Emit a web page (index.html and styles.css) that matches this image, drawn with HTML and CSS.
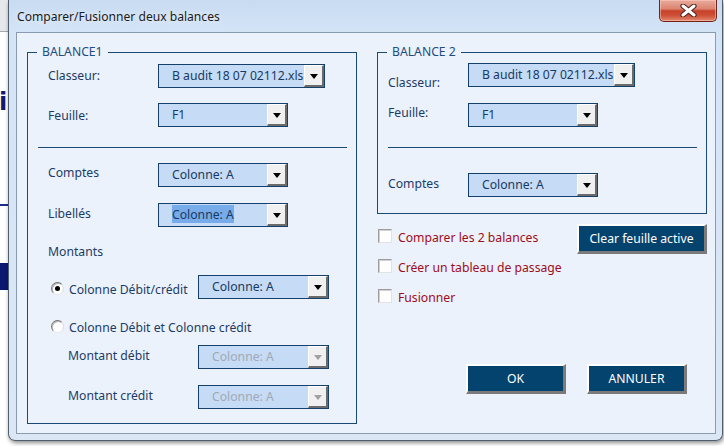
FILE: index.html
```html
<!DOCTYPE html>
<html lang="fr">
<head>
<meta charset="utf-8">
<title>Comparer/Fusionner deux balances</title>
<link rel="stylesheet" href="styles.css">
</head>
<body>
<div class="desk">
  <div class="backdrop">
    <div class="bd-top"></div>
    <div class="bd-line"></div>
    <div class="bd-glyph">i</div>
    <div class="bd-rule"></div>
    <div class="bd-block"></div>
  </div>
  <div class="window">
    <div class="titlebar">
      <span class="title">Comparer/Fusionner deux balances</span>
      <div class="close">
        <svg width="17" height="13" viewBox="0 0 17 13">
          <path d="M3 2 L14 11 M14 2 L3 11" stroke="#4a2620" stroke-width="5.2" stroke-linecap="round" fill="none"/>
          <path d="M3 2 L14 11 M14 2 L3 11" stroke="#ffffff" stroke-width="3" stroke-linecap="round" fill="none"/>
        </svg>
      </div>
    </div>
    <div class="client">
      <fieldset class="group g1">
        <legend>BALANCE1</legend>
        <div class="row r-classeur1">
          <span class="lab lab1 pt2">Classeur:</span>
          <div class="combo w167"><span class="val">B audit 18 07 02112.xls</span><span class="arrow"></span></div>
        </div>
        <div class="row r-feuille1">
          <span class="lab lab1 pt4">Feuille:</span>
          <div class="combo w130"><span class="val">F1</span><span class="arrow"></span></div>
        </div>
        <div class="sep"></div>
        <div class="row r-comptes1">
          <span class="lab lab1">Comptes</span>
          <div class="combo w130"><span class="val">Colonne: A</span><span class="arrow"></span></div>
        </div>
        <div class="row r-libelles">
          <span class="lab lab1 pt1">Libellés</span>
          <div class="combo w130"><span class="val"><span class="sel">Colonne: A</span></span><span class="arrow"></span></div>
        </div>
        <div class="montants">Montants</div>
        <div class="row r-radio1">
          <span class="lab lab-radio pt4"><span class="radio on"><span class="dot"></span></span><span class="rtext">Colonne Débit/crédit</span></span>
          <div class="combo w131"><span class="val">Colonne: A</span><span class="arrow"></span></div>
        </div>
        <div class="radio-line">
          <span class="radio"></span><span class="rtext">Colonne Débit et Colonne crédit</span>
        </div>
        <div class="row r-debit">
          <span class="lab lab-sub pt1">Montant débit</span>
          <div class="combo w131 disabled"><span class="val">Colonne: A</span><span class="arrow"></span></div>
        </div>
        <div class="row r-credit">
          <span class="lab lab-sub pt1">Montant crédit</span>
          <div class="combo w131 disabled"><span class="val">Colonne: A</span><span class="arrow"></span></div>
        </div>
      </fieldset>

      <div class="rightcol">
        <fieldset class="group g2">
          <legend>BALANCE 2</legend>
          <div class="row r-classeur2">
            <span class="lab lab2 pt10">Classeur:</span>
            <div class="combo w167"><span class="val">B audit 18 07 02112.xls</span><span class="arrow"></span></div>
          </div>
          <div class="row r-feuille2">
            <span class="lab lab2">Feuille:</span>
            <div class="combo w130"><span class="val">F1</span><span class="arrow"></span></div>
          </div>
          <div class="sep"></div>
          <div class="row r-comptes2">
            <span class="lab lab2 pt1">Comptes</span>
            <div class="combo w130"><span class="val">Colonne: A</span><span class="arrow"></span></div>
          </div>
        </fieldset>

        <div class="options">
          <div class="checks">
            <label class="check"><span class="box"></span><span class="ctext">Comparer les 2 balances</span></label>
            <label class="check"><span class="box"></span><span class="ctext">Créer un tableau de passage</span></label>
            <label class="check"><span class="box"></span><span class="ctext">Fusionner</span></label>
          </div>
          <button class="btn btn-clear">Clear feuille active</button>
        </div>

        <div class="actions">
          <button class="btn btn-action">OK</button>
          <button class="btn btn-action">ANNULER</button>
        </div>
      </div>
    </div>
  </div>
</div>
</body>
</html>
```
FILE: styles.css
```css
* { box-sizing: border-box; }
html, body { margin: 0; padding: 0; }
body {
  width: 724px;
  height: 446px;
  overflow: hidden;
  background: #ffffff;
  font-family: "Noto Sans", "DejaVu Sans", sans-serif;
  font-size: 12.2px;
}
.desk { display: flex; height: 446px; align-items: flex-start; }

/* spreadsheet visible behind the dialog */
.backdrop {
  width: 8px;
  flex: none;
  height: 446px;
  display: flex;
  flex-direction: column;
  overflow: hidden;
  background: #ffffff;
}
.bd-top { height: 31px; background: #e6e8eb; flex: none; }
.bd-line { height: 1px; background: #a3a9b0; flex: none; }
.bd-glyph {
  margin-top: 58px;
  height: 24px;
  line-height: 24px;
  font-family: "DejaVu Sans", sans-serif;
  font-weight: bold;
  font-size: 24px;
  color: #141a6e;
  margin-left: -1px;
  flex: none;
}
.bd-rule { margin-top: 90px; height: 2px; background: #1c2b8c; flex: none; }
.bd-block { margin-top: 57px; height: 27px; background: #0c1770; flex: none; }

/* window frame */
.window {
  width: 715px;
  height: 441px;
  flex: none;
  border: 1px solid #4f5d6d;
  border-top: 0;
  border-radius: 0 0 7px 7px;
  background: linear-gradient(#c8dbf2 0, #d4e4f7 32px, #dbe7f5 100%);
  padding: 0 6px 6px 7px;
  display: flex;
  flex-direction: column;
  box-shadow: 1px 2px 4px rgba(0, 0, 0, 0.45);
}
.titlebar {
  height: 32px;
  flex: none;
  display: flex;
  justify-content: space-between;
  align-items: flex-start;
}
.title {
  margin: 8px 0 0 1px;
  line-height: 18px;
  font-family: "Noto Sans", sans-serif;
  font-size: 12.1px;
  color: #1b1b1b;
  text-shadow: 0 0 6px rgba(255, 255, 255, 0.9);
}
.close {
  width: 58px;
  height: 22px;
  margin-right: -1px;
  border: 1px solid #6d251a;
  border-top: 0;
  border-radius: 0 0 5px 5px;
  background: linear-gradient(#e9ab9d 0, #dc8470 42%, #c6412a 52%, #cf5238 75%, #e28a70 100%);
  box-shadow: inset 0 0 0 1px rgba(255, 210, 200, 0.5);
  display: flex;
  align-items: center;
  justify-content: center;
}
.close svg { display: block; margin-top: -1px; }

/* client area */
.client {
  flex: 1;
  border: 1px solid #8a9cb1;
  background: #ebf2fb;
  display: flex;
  align-items: flex-start;
  gap: 20px;
  padding: 11px 8px 0 10px;
}
.group {
  margin: 0;
  padding: 0;
  min-width: 0;
  width: 330px;
  border: 1px solid #1b4a76;
}
.g1 { height: 380px; }
.g2 { height: 170px; }
legend {
  padding: 0 5px;
  margin-left: 9px;
  line-height: 16px;
  font-size: 12.2px;
  color: #1d4c80;
}

.row { display: flex; align-items: flex-start; height: 24px; }
.lab { line-height: 16px; color: #1c3b66; white-space: nowrap; }
.lab1 { width: 130px; padding-left: 20px; }
.lab2 { width: 90px; padding-left: 10px; }
.lab-radio { width: 170px; padding-left: 23px; display: flex; align-items: flex-start; }
.lab-sub { width: 170px; padding-left: 40px; }
.pt0 { padding-top: 2px; }
.lab1, .lab2, .lab-sub { padding-top: 2px; }
.pt1 { padding-top: 3px; }
.pt2 { padding-top: 4px; }
.pt4 { padding-top: 5px; }
.pt10 { padding-top: 12px; }

.r-classeur1 { margin-top: 4px; }
.r-feuille1 { margin-top: 15px; }
.r-comptes1 { margin-top: 15px; }
.r-libelles { margin-top: 16px; }
.r-radio1 { margin-top: 15px; }
.r-debit { margin-top: 11px; }
.r-credit { margin-top: 16px; }

.r-classeur2 { margin-top: 3px; }
.r-feuille2 { margin-top: 16px; }
.r-comptes2 { margin-top: 25px; }

.sep {
  height: 1px;
  background: #1b4a76;
  margin: 20px 9px 0 10px;
}

.montants {
  margin-top: 17px;
  padding-left: 20px;
  line-height: 16px;
  color: #1c3b66;
}
.radio-line {
  margin-top: 19px;
  padding-left: 23px;
  line-height: 16px;
  color: #1c3b66;
  display: flex;
  align-items: flex-start;
  height: 16px;
}
.rtext { padding-top: 2px; line-height: 16px; }

.radio {
  width: 13px;
  height: 13px;
  flex: none;
  margin-right: 5px;
  margin-top: 2px;
  border-radius: 50%;
  background: #ffffff;
  border: 1px solid;
  border-color: #6f6f6f #dcdcdc #e8e8e8 #7a7a7a;
  box-shadow: inset 1px 1px 0 #b8b8b8;
  display: flex;
  align-items: center;
  justify-content: center;
}
.dot { width: 5px; height: 5px; border-radius: 50%; background: #000000; }

/* combo boxes */
.combo {
  display: flex;
  height: 24px;
  flex: none;
  border: 1px solid #15406a;
  background: #c5dbf6;
}
.w167 { width: 167px; }
.w130 { width: 130px; }
.w131 { width: 131px; }
.val {
  flex: 1;
  min-width: 0;
  overflow: hidden;
  white-space: nowrap;
  padding: 3px 0 0 13px;
  line-height: 16px;
  color: #173a63;
}
.sel { background: #77abe9; display: inline-block; margin-top: -2px; padding-top: 2px; }
.arrow {
  width: 20px;
  flex: none;
  background: #f0f0f0;
  border-style: solid;
  border-width: 1px 2px 2px 1px;
  border-color: #ffffff #6b6b6b #6b6b6b #ffffff;
  display: flex;
  align-items: center;
  justify-content: center;
}
.arrow::after {
  content: "";
  border-left: 4px solid transparent;
  border-right: 4px solid transparent;
  border-top: 5px solid #000000;
  margin-top: 1px;
}
.disabled .val { color: #a2a9b4; }
.disabled .arrow::after { border-top-color: #a0a0a0; }

/* right column */
.rightcol { width: 330px; display: flex; flex-direction: column; }
.options {
  margin-top: 10px;
  display: flex;
  justify-content: space-between;
  align-items: flex-start;
}
.checks {
  padding: 4px 0 0 1px;
  display: flex;
  flex-direction: column;
  gap: 14px;
}
.check {
  height: 16px;
  display: flex;
  align-items: flex-start;
  color: #9e0b20;
  white-space: nowrap;
}
.ctext { padding-top: 2px; line-height: 16px; }
.box {
  width: 14px;
  height: 14px;
  flex: none;
  margin-top: 1px;
  margin-right: 6px;
  background: #ffffff;
  border: 1px solid;
  border-color: #9d9d9d #e2e2e2 #e2e2e2 #9d9d9d;
  box-shadow: inset 1px 1px 0 #d0d0d0;
}

.btn {
  font-family: "Noto Sans", sans-serif;
  font-size: 12.2px;
  color: #ffffff;
  background: #05436f;
  border-style: solid;
  border-width: 2px 3px 3px 2px;
  border-color: #ffffff #7b7b7b #7b7b7b #ffffff;
  padding: 0;
  line-height: 16px;
  margin: 0;
}
.btn-clear { width: 130px; height: 30px; }
.actions {
  margin-top: 60px;
  padding-right: 20px;
  display: flex;
  justify-content: flex-end;
  gap: 21px;
}
.btn-action { width: 100px; height: 30px; }
```
